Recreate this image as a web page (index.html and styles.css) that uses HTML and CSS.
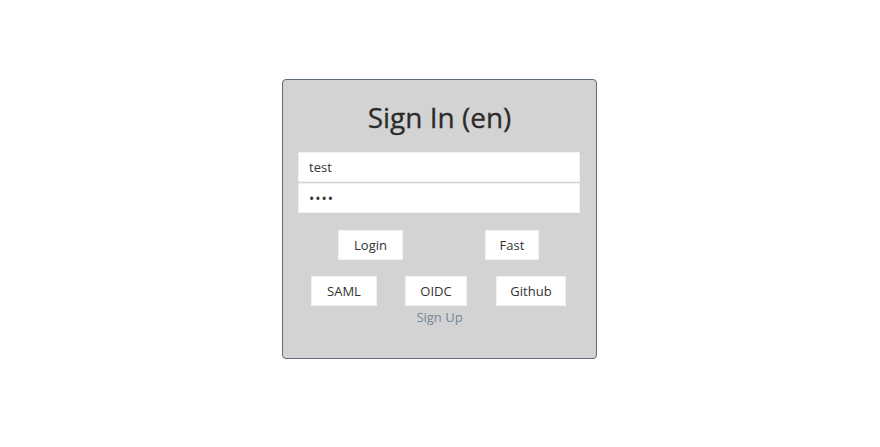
FILE: index.html
```html
<!DOCTYPE html>
<html>
<head>
<meta charset="utf-8">
<link rel="stylesheet" href="styles.css">
</head>
<body>
<div class="page">
  <form class="card">
    <h1 class="title">Sign In (en)</h1>
    <div class="fields">
      <input class="field" type="text" value="test">
      <input class="field pw" type="password" value="test">
    </div>
    <div class="row row-2">
      <button type="button" class="btn btn-login">Login</button>
      <button type="button" class="btn btn-fast">Fast</button>
    </div>
    <div class="row row-3">
      <button type="button" class="btn btn-saml">SAML</button>
      <button type="button" class="btn btn-oidc">OIDC</button>
      <button type="button" class="btn btn-github">Github</button>
    </div>
    <a class="signup" href="#">Sign Up</a>
  </form>
</div>
</body>
</html>
```
FILE: styles.css
```css
html, body {
  margin: 0;
  padding: 0;
  background: #fff;
}
body {
  font-family: "Open Sans", "Noto Sans", sans-serif;
  color: #333;
}
.page {
  display: flex;
  justify-content: center;
  padding-top: 79px;
  padding-right: 1px;
}
.card {
  box-sizing: border-box;
  width: 315px;
  height: 280px;
  background: #d3d3d3;
  border: 1px solid #5f6b78;
  border-radius: 4px;
  padding: 0 15px;
  display: flex;
  flex-direction: column;
}
.title {
  margin: 17px 0 0;
  font-weight: 400;
  font-size: 28px;
  line-height: 40px;
  text-align: center;
  color: #2b2b2b;
  -webkit-text-stroke: 0.3px #2b2b2b;
}
.fields {
  margin-top: 15px;
  display: flex;
  flex-direction: column;
  gap: 1px;
}
.field {
  box-sizing: border-box;
  width: 282px;
  height: 30px;
  margin: 0;
  border: 1px dotted #e4e4e4;
  background: #fff;
  padding: 0 10px;
  font-family: inherit;
  font-size: 13px;
  color: #333;
  outline: none;
}
.pw {
  font-size: 14px;
  letter-spacing: 1px;
}
.row {
  display: flex;
  justify-content: center;
  padding-right: 2px;
}
.row-2 {
  margin-top: 17px;
  gap: 82px;
}
.row-3 {
  margin-top: 16px;
  gap: 28px;
}
.btn {
  box-sizing: border-box;
  height: 30px;
  background: #fff;
  border: 1px dotted #e6e6e6;
  padding: 0;
  font-family: inherit;
  font-size: 13px;
  color: #333;
}
.btn-login { width: 65px; }
.btn-fast { width: 54px; }
.btn-saml { width: 66px; }
.btn-oidc { width: 62px; margin-right: 1px; }
.btn-github { width: 70px; }
.signup {
  align-self: center;
  margin-top: 2px;
  font-size: 13px;
  line-height: 18px;
  color: #74879b;
  text-decoration: none;
}
```
